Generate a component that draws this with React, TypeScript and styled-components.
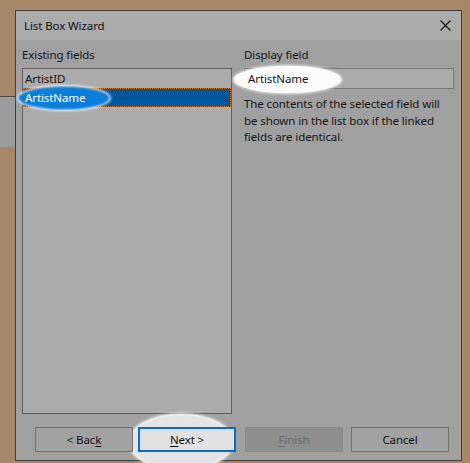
import React from "react";
import styled, { createGlobalStyle } from "styled-components";

const GlobalStyle = createGlobalStyle`
  html, body {
    margin: 0;
    padding: 0;
    background: #a68768;
  }
  body {
    font-family: "Noto Sans", "Open Sans", sans-serif;
    font-size: 11.5px;
    letter-spacing: -0.1px;
    color: #151515;
  }
`;

const Desktop = styled.div`
  position: relative;
  width: 470px;
  height: 463px;
  overflow: hidden;
  background: #a68768;
`;

const BehindWindow = styled.div`
  position: absolute;
  left: 0;
  top: 96px;
  width: 15px;
  height: 50px;
  background: #9c9c9c;
  border-top: 1px solid #4c4c4c;
`;

const Dialog = styled.div`
  position: absolute;
  left: 15px;
  top: 10px;
  width: 445px;
  height: 449px;
  border: 1px solid #3e3e3e;
  display: flex;
  flex-direction: column;
  background: #a0a0a0;
`;

const TitleBar = styled.div`
  height: 29px;
  flex: none;
  background: #ababab;
  display: flex;
  align-items: center;
  justify-content: space-between;
  padding: 0 10px 0 8px;
`;

const Title = styled.span`
  color: #111;
`;

const CloseIcon = styled.svg`
  width: 11px;
  height: 11px;
  display: block;
`;

const Body = styled.div`
  flex: 1;
  display: flex;
  flex-direction: column;
  padding: 7px 7px 8px 6px;
`;

const Columns = styled.div`
  flex: 1;
  display: grid;
  grid-template-columns: 210px 210px;
  column-gap: 12px;
`;

const Column = styled.div`
  display: flex;
  flex-direction: column;
`;

const Label = styled.div`
  height: 16px;
  line-height: 16px;
  margin-bottom: 5px;
`;

const ListBox = styled.div`
  flex: 1;
  background: #ababab;
  border: 1px solid #5e5e5e;
  display: flex;
  flex-direction: column;
`;

const ListItem = styled.div<{ $selected?: boolean }>`
  position: relative;
  height: 19px;
  line-height: 19px;
  padding-left: 2px;
  color: ${(p) => (p.$selected ? "#ffffff" : "#151515")};
  background: ${(p) => (p.$selected ? "#00569b" : "transparent")};
  outline: ${(p) => (p.$selected ? "1px dotted #d0701e" : "none")};
  outline-offset: -1px;
`;

const Spotlit = styled.div`
  position: relative;
  display: flex;
`;

const Halo = styled.div<{ $l: number; $t: number; $w: number; $h: number; $fill: string }>`
  position: absolute;
  left: ${(p) => p.$l}px;
  top: ${(p) => p.$t}px;
  width: ${(p) => p.$w}px;
  height: ${(p) => p.$h}px;
  border-radius: 50%;
  background: ${(p) => p.$fill};
  box-shadow: 0 0 3px 1px rgba(255, 255, 255, 0.85), inset 0 0 2px 1px rgba(255, 255, 255, 0.6);
  z-index: 0;
`;

const Front = styled.span`
  position: relative;
  z-index: 1;
`;

const TextBox = styled.div`
  position: relative;
  height: 19px;
  line-height: 19px;
  border: 1px solid #787878;
  background: #ababab;
  padding-left: 3px;
`;

const Description = styled.p`
  margin: 7px 0 0 0;
  line-height: 16.5px;
  color: #151515;
`;

const ButtonRow = styled.div`
  display: flex;
  margin-top: 13px;
  padding-left: 13px;
  height: 25px;
`;

const Button = styled.div<{ $variant?: "normal" | "focus" | "disabled"; $ml?: number }>`
  position: relative;
  z-index: 1;
  box-sizing: border-box;
  width: 98px;
  height: 25px;
  margin-left: ${(p) => p.$ml ?? 0}px;
  display: flex;
  align-items: center;
  justify-content: center;
  border: ${(p) =>
    p.$variant === "focus"
      ? "2px solid #0a6cc9"
      : p.$variant === "disabled"
      ? "1px solid #8a8a8a"
      : "1px solid #727272"};
  background: ${(p) =>
    p.$variant === "focus" ? "#e1e1e1" : p.$variant === "disabled" ? "#8e8e8e" : "#a2a2a2"};
  color: ${(p) => (p.$variant === "disabled" ? "#6c6c6c" : "#111")};
`;

const Key = styled.span`
  text-decoration: underline;
  text-underline-offset: 2px;
`;

export default function App() {
  return (
    <Desktop>
      <GlobalStyle />
      <BehindWindow />
      <Dialog>
        <TitleBar>
          <Title>List Box Wizard</Title>
          <CloseIcon viewBox="0 0 11 11">
            <path d="M0.5 0.5 L10.5 10.5 M10.5 0.5 L0.5 10.5" stroke="#111" strokeWidth="1.1" fill="none" />
          </CloseIcon>
        </TitleBar>
        <Body>
          <Columns>
            <Column>
              <Label>Existing fields</Label>
              <ListBox>
                <ListItem>ArtistID</ListItem>
                <ListItem $selected>
                  <Halo $l={-5} $t={-2} $w={92} $h={24} $fill="#0c7dd8" />
                  <Front>ArtistName</Front>
                </ListItem>
              </ListBox>
            </Column>
            <Column>
              <Label>Display field</Label>
              <TextBox>
                <Halo $l={-11} $t={-3} $w={107} $h={27} $fill="#fbfbfb" />
                <Front>ArtistName</Front>
              </TextBox>
              <Description>
                The contents of the selected field will be shown in the list box if the linked fields are identical.
              </Description>
            </Column>
          </Columns>
          <ButtonRow>
            <Button>
              <span>
                &lt; Bac<Key>k</Key>
              </span>
            </Button>
            <Spotlit>
              <Halo $l={-4} $t={-13} $w={104} $h={56} $fill="#e4e4e4" />
              <Button $variant="focus" $ml={5}>
                <span>
                  <Key>N</Key>ext &gt;
                </span>
              </Button>
            </Spotlit>
            <Button $variant="disabled" $ml={9}>
              <span>
                <Key>F</Key>inish
              </span>
            </Button>
            <Button $ml={8}>Cancel</Button>
          </ButtonRow>
        </Body>
      </Dialog>
    </Desktop>
  );
}
